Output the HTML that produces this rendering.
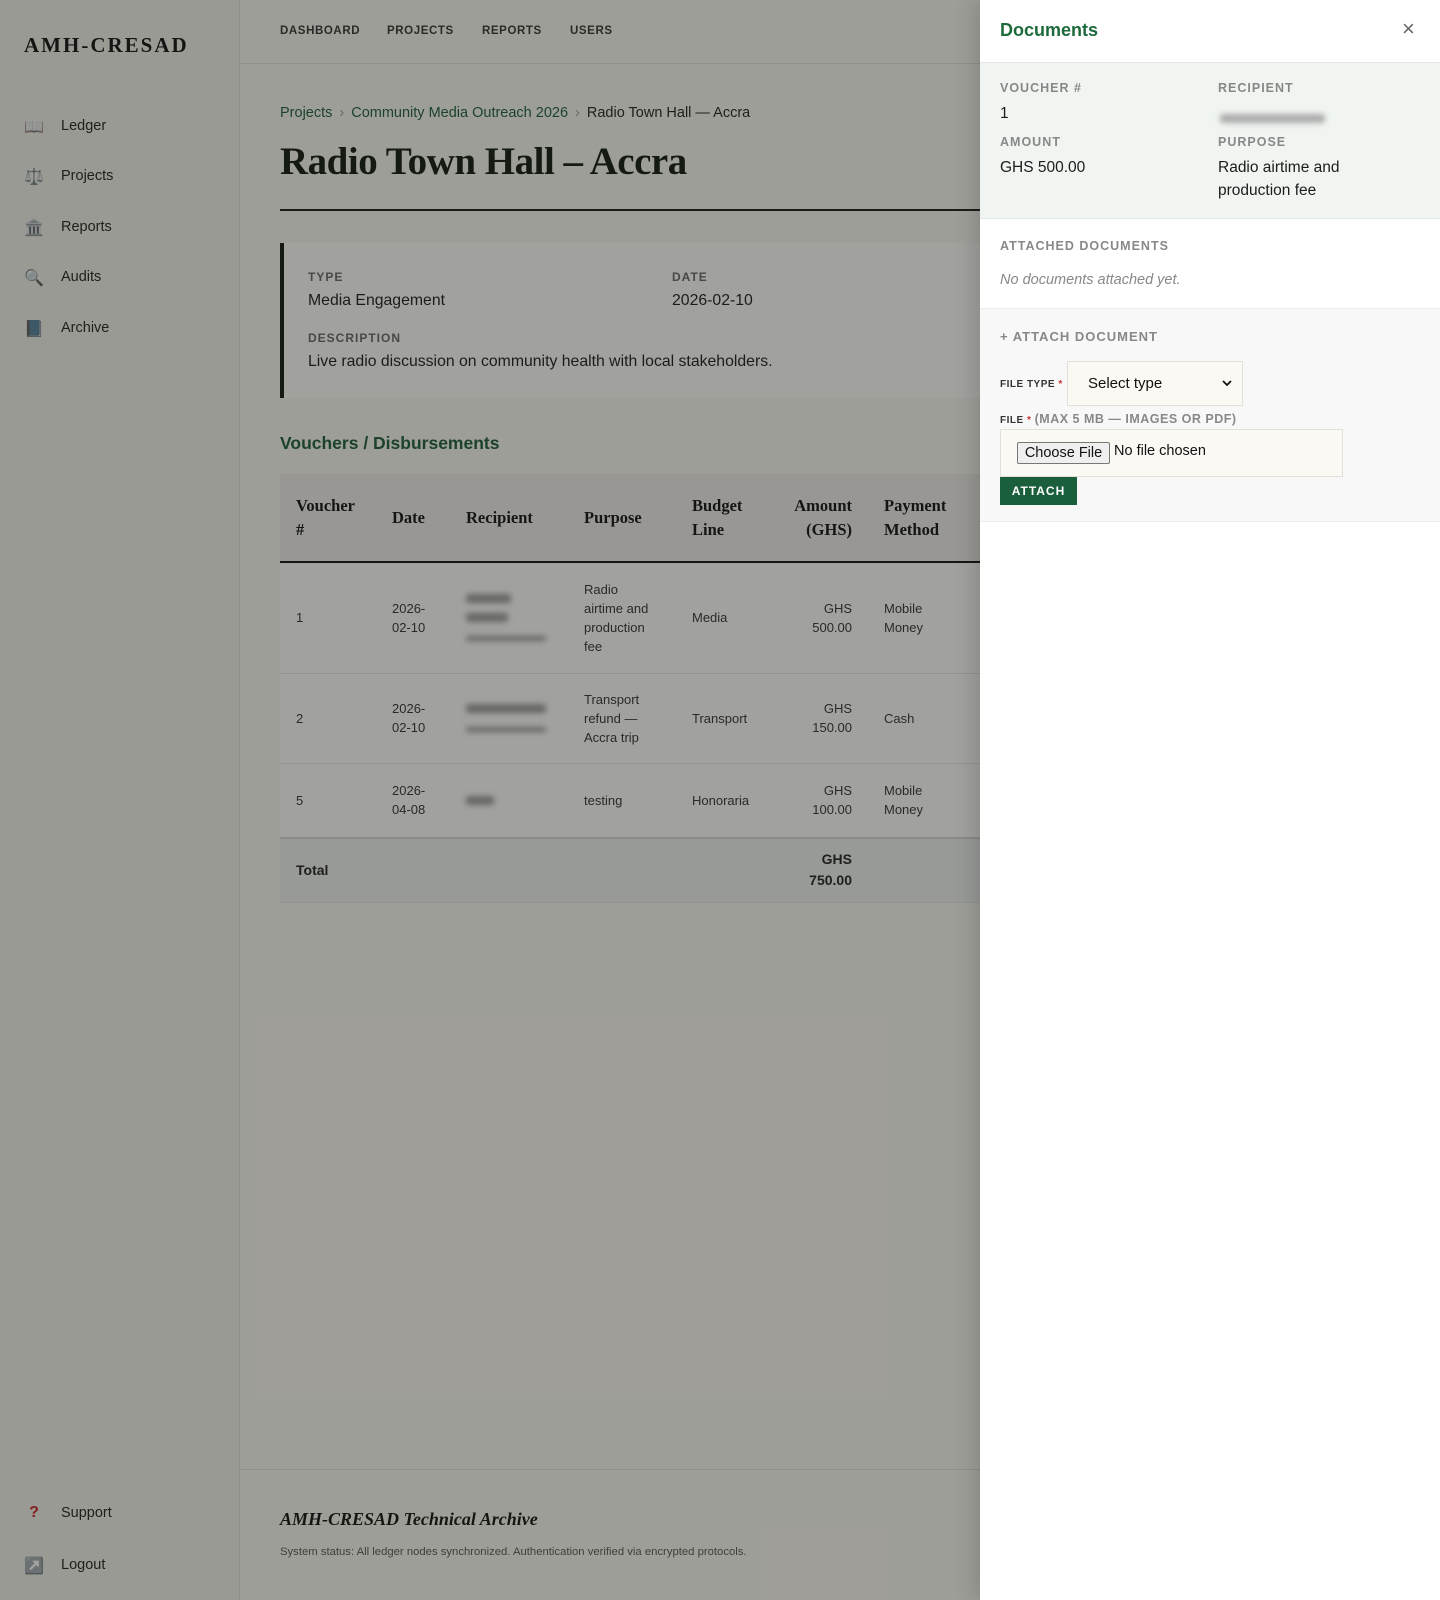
<!DOCTYPE html>
<html><head><meta charset="utf-8"><style>
*{box-sizing:border-box;margin:0;padding:0}
body{width:1440px;height:1600px;position:relative;overflow:hidden;font-family:"Liberation Sans",sans-serif;background:#f6f5f1;color:#1c1f1c}
.side{position:absolute;left:0;top:0;width:240px;height:1600px;background:#efeeea;border-right:1px solid #e2e0da}
.logo{position:absolute;left:24px;top:33px;font-family:"Liberation Serif",serif;font-weight:bold;font-size:21px;letter-spacing:2px;color:#111}
.si{position:absolute;left:24px;font-size:14.5px;color:#222;display:flex;align-items:center}
.si i{display:inline-block;width:20px;height:18px;margin-right:17px;font-style:normal;font-size:16px;text-align:center;filter:saturate(.3)}
.top{position:absolute;left:240px;top:0;right:0;height:64px;border-bottom:1px solid #e0ded8}
.top span{position:absolute;top:25px;font-size:11.5px;font-weight:bold;letter-spacing:.6px;color:#333}
.bc{position:absolute;left:280px;top:105px;font-size:14.5px;color:#1d5c3a}
.bc b{font-weight:normal;color:#999;margin:0 7px}
.bc em{font-style:normal;color:#222}
h1{position:absolute;left:280px;top:139px;font-family:"Liberation Serif",serif;font-size:39px;color:#0f1a12;letter-spacing:-.5px}
.rule{position:absolute;left:280px;top:209px;width:720px;height:2px;background:#1b1b1b}
.card{position:absolute;left:280px;top:243px;width:720px;height:155px;background:#fafaf8;border-left:4px solid #101810}
.lab{font-size:12px;font-weight:bold;letter-spacing:1px;color:#666;position:absolute}
.val{font-size:15.8px;color:#1c1c1c;position:absolute}
.vh{position:absolute;left:280px;top:433px;font-size:17.5px;font-weight:bold;color:#1d5c3a}
table{position:absolute;left:280px;top:474px;width:1120px;border-collapse:collapse;font-size:13px;color:#333}
th{font-family:"Liberation Serif",serif;font-size:16.5px;text-align:left;font-weight:bold;color:#111;height:88px;background:#ebeae6;border-bottom:2px solid #111;padding:0 16px;line-height:24px}
td{padding:0 16px;border-bottom:1px solid #e4e3df;line-height:19px;background:#fafaf9}
.r{text-align:right}
.blur{display:inline-block;height:9px;background:#999;filter:blur(3px);border-radius:3px}
tr.tot td{background:#e9eeec;border-top:2px solid #cfd8d3;font-weight:bold;height:64px;font-size:14px;color:#222}
.foot{position:absolute;left:240px;top:1469px;right:0;border-top:1px solid #e0ded8;height:131px}
.ov{position:absolute;left:0;top:0;width:1440px;height:1600px;background:rgba(28,28,22,0.4)}
.panel{position:absolute;left:980px;top:0;width:460px;height:1600px;background:#fff;box-shadow:-6px 0 20px rgba(0,0,0,.15)}
.pl{font-size:12.5px;font-weight:bold;letter-spacing:1px;color:#888;position:absolute}
.pv{font-size:15.5px;color:#1c1c1c;position:absolute;line-height:23px}
</style></head><body>
<div class="side">
<div class="logo">AMH-CRESAD</div>
<div class="si" style="top:117px"><i>📖</i>Ledger</div>
<div class="si" style="top:167px"><i>⚖️</i>Projects</div>
<div class="si" style="top:218px"><i>🏛️</i>Reports</div>
<div class="si" style="top:268px"><i>🔍</i>Audits</div>
<div class="si" style="top:319px"><i>📘</i>Archive</div>
<div class="si" style="top:1504px"><i style="color:#c22;font-weight:bold;filter:none">?</i>Support</div>
<div class="si" style="top:1556px"><i>↗️</i>Logout</div>
</div>
<div class="top"><span style="left:40px">DASHBOARD</span><span style="left:147px">PROJECTS</span><span style="left:242px">REPORTS</span><span style="left:330px">USERS</span></div>
<div class="bc">Projects<b>›</b>Community Media Outreach 2026<b>›</b><em>Radio Town Hall — Accra</em></div>
<h1>Radio Town Hall – Accra</h1>
<div class="rule"></div>
<div class="card">
<div class="lab" style="left:24px;top:27px">TYPE</div><div class="val" style="left:24px;top:49px">Media Engagement</div>
<div class="lab" style="left:388px;top:27px">DATE</div><div class="val" style="left:388px;top:49px">2026-02-10</div>
<div class="lab" style="left:24px;top:88px">DESCRIPTION</div><div class="val" style="left:24px;top:110px">Live radio discussion on community health with local stakeholders.</div>
</div>
<div class="vh">Vouchers / Disbursements</div>
<table>
<tr><th style="width:96px">Voucher<br>#</th><th style="width:74px">Date</th><th style="width:118px">Recipient</th><th style="width:108px">Purpose</th><th style="width:96px">Budget<br>Line</th><th class="r" style="width:96px">Amount<br>(GHS)</th><th>Payment<br>Method</th></tr>
<tr style="height:111px"><td>1</td><td>2026-<br>02-10</td><td><span class="blur" style="width:45px"></span><br><span class="blur" style="width:42px"></span><br><span class="blur" style="width:80px;height:5px"></span></td><td>Radio<br>airtime and<br>production<br>fee</td><td>Media</td><td class="r">GHS<br>500.00</td><td>Mobile<br>Money</td></tr>
<tr style="height:90px"><td>2</td><td>2026-<br>02-10</td><td><span class="blur" style="width:80px"></span><br><span class="blur" style="width:80px;height:5px"></span></td><td>Transport<br>refund —<br>Accra trip</td><td>Transport</td><td class="r">GHS<br>150.00</td><td>Cash</td></tr>
<tr style="height:75px"><td>5</td><td>2026-<br>04-08</td><td><span class="blur" style="width:28px"></span></td><td>testing</td><td>Honoraria</td><td class="r">GHS<br>100.00</td><td>Mobile<br>Money</td></tr>
<tr class="tot"><td>Total</td><td></td><td></td><td></td><td></td><td class="r" style="line-height:21px">GHS<br>750.00</td><td></td></tr>
</table>
<div class="foot">
<div style="position:absolute;left:40px;top:39px;font-family:'Liberation Serif',serif;font-style:italic;font-weight:bold;font-size:18px;color:#111">AMH-CRESAD Technical Archive</div>
<div style="position:absolute;left:40px;top:76px;font-size:11.3px;color:#555">System status: All ledger nodes synchronized. Authentication verified via encrypted protocols.</div>
</div>
<div class="ov"></div>
<div class="panel">
<div style="position:absolute;left:20px;top:20px;font-size:18px;font-weight:bold;color:#1d6b3c">Documents</div>
<div style="position:absolute;left:422px;top:16px;font-size:22px;color:#666">×</div>
<div style="position:absolute;left:0;top:62px;width:460px;height:157px;background:#f0f5f1;border-top:1px solid #e3e8e4;border-bottom:1px solid #e3e8e4">
<div class="pl" style="left:20px;top:18px">VOUCHER #</div><div class="pv" style="left:20px;top:39px">1</div>
<div class="pl" style="left:238px;top:18px">RECIPIENT</div><div style="position:absolute;left:240px;top:47px"><span class="blur" style="width:105px;background:#aaa"></span></div>
<div class="pl" style="left:20px;top:72px">AMOUNT</div><div class="pv" style="left:20px;top:93px">GHS 500.00</div>
<div class="pl" style="left:238px;top:72px">PURPOSE</div><div class="pv" style="left:238px;top:93px">Radio airtime and<br>production fee</div>
</div>
<div class="pl" style="left:20px;top:239px">ATTACHED DOCUMENTS</div>
<div style="position:absolute;left:20px;top:272px;font-size:14.5px;font-style:italic;color:#888">No documents attached yet.</div>
<div style="position:absolute;left:0;top:308px;width:460px;height:214px;background:#f7f8f7;border-top:1px solid #eceeec;border-bottom:1px solid #eceeec">
<div class="pl" style="left:20px;top:20px;font-size:13px">+ ATTACH DOCUMENT</div>
<div style="position:absolute;left:20px;top:70px;font-size:10px;font-weight:bold;letter-spacing:.5px;color:#333">FILE TYPE <span style="color:#c33">*</span></div>
<div style="position:absolute;left:87px;top:52px;width:176px;height:45px;background:#fbf9f4;border:1px solid #e3e0d8;font-size:15px;padding:13px 20px;color:#111">Select type<svg style="position:absolute;right:10px;top:18px" width="10" height="7" viewBox="0 0 10 7"><path d="M1 1l4 4 4-4" fill="none" stroke="#111" stroke-width="1.8"/></svg></div>
<div style="position:absolute;left:20px;top:103px;font-size:10px;font-weight:bold;letter-spacing:.5px;color:#333">FILE <span style="color:#c33">*</span> <span style="color:#888;font-size:12.5px">(MAX 5 MB — IMAGES OR PDF)</span></div>
<div style="position:absolute;left:20px;top:120px;width:343px;height:48px;background:#fbf9f4;border:1px solid #e3e0d8">
<div style="position:absolute;left:16px;top:12px;width:93px;height:22px;border:1px solid #777;border-radius:2px;background:#efefef;font-size:14.5px;text-align:center;line-height:20px;color:#111">Choose File</div>
<div style="position:absolute;left:113px;top:13px;font-size:14.5px;color:#111">No file chosen</div></div>
<div style="position:absolute;left:20px;top:168px;width:77px;height:28px;background:#1b5e3b;color:#fff;font-size:12px;font-weight:bold;letter-spacing:1px;text-align:center;line-height:28px">ATTACH</div>
</div>
</div>
</body></html>
